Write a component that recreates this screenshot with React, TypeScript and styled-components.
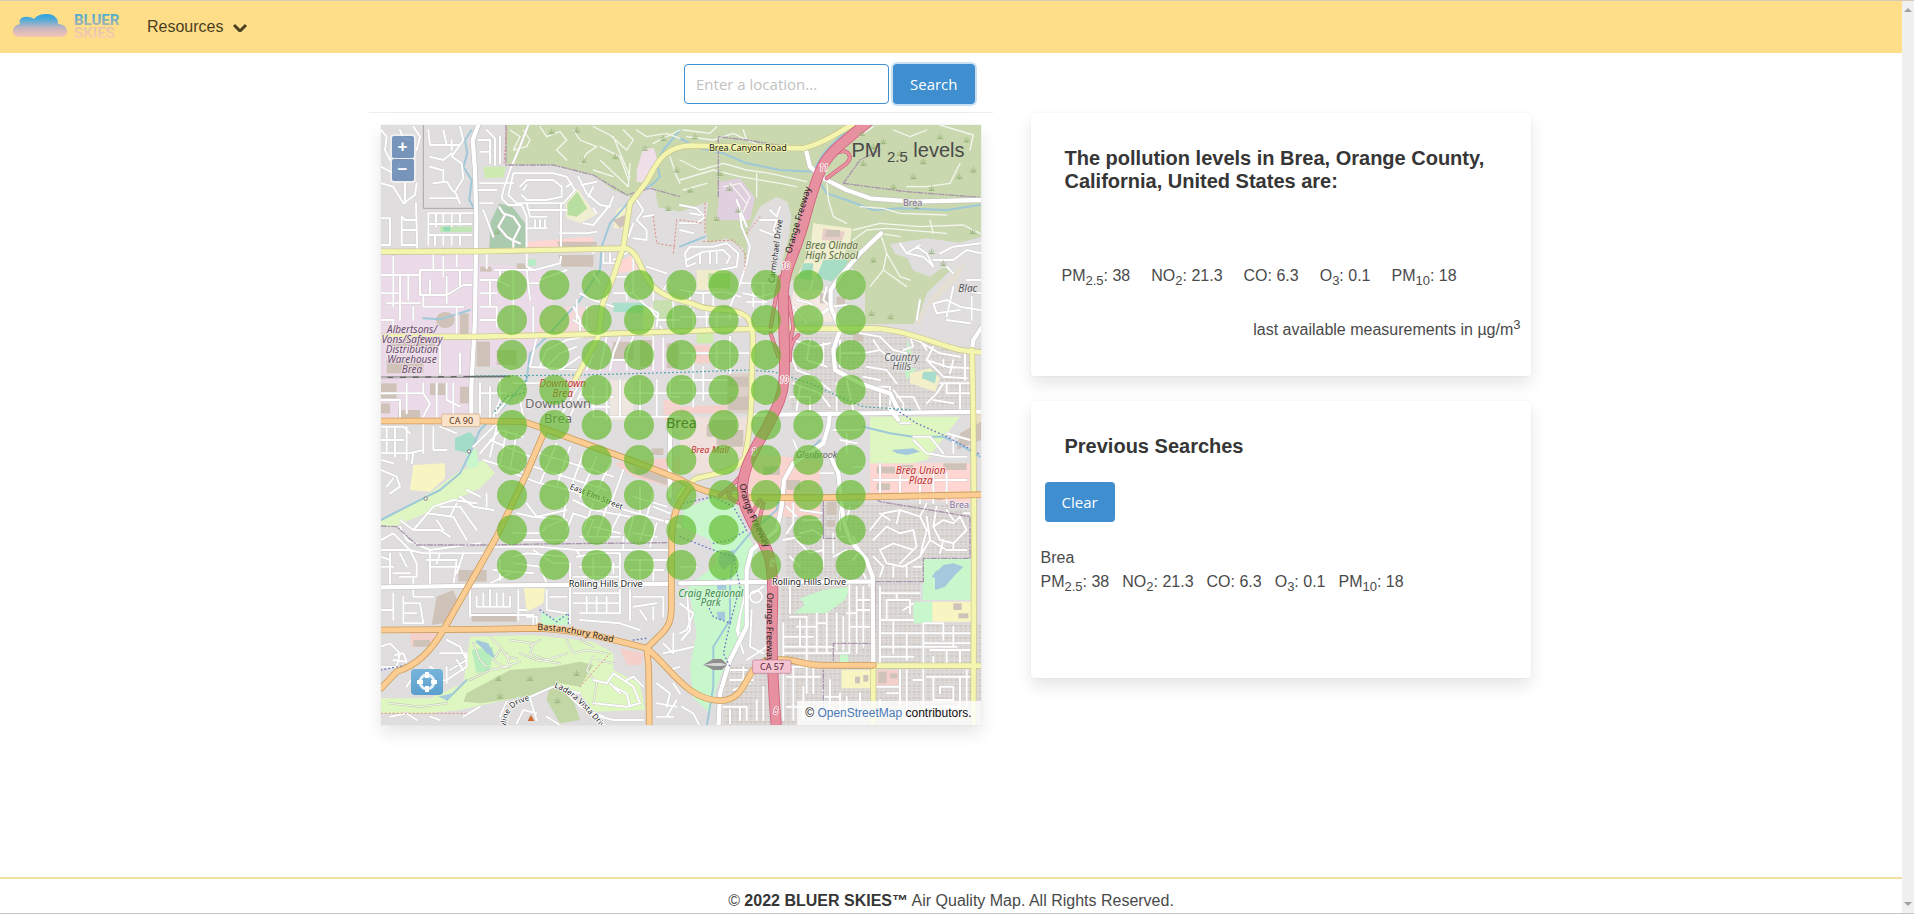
import React from "react";
import styled, { createGlobalStyle } from "styled-components";

const GlobalStyle = createGlobalStyle`
  *, *::before, *::after { box-sizing: border-box; }
  body {
    margin: 0;
    background: #fff;
    color: #4a4a4a;
    font-family: "Liberation Sans", Arial, sans-serif;
    font-size: 16px;
    line-height: 24px;
  }
`;

const uiFont = `"Open Sans", "Noto Sans", sans-serif`;

/* ---------- page frame ---------- */

const Shell = styled.div`
  display: flex;
  min-height: calc(100vh - 1px);
  border-top: 1px solid #d5cbb4;
  border-bottom: 1px solid #c4c4c4;
`;

const Page = styled.div`
  flex: 1;
  min-width: 0;
  display: flex;
  flex-direction: column;
`;

const ScrollTrack = styled.div`
  width: 12px;
  display: flex;
  flex-direction: column;
  justify-content: space-between;
  align-items: center;
  padding: 7px 0;
  background: #f0f0f0;
`;

const ScrollArrow = styled.span<{ $down?: boolean }>`
  border: 4px solid transparent;
  border-top-width: ${(p) => (p.$down ? 4 : 0)}px;
  border-bottom-width: ${(p) => (p.$down ? 0 : 4)}px;
  border-top-color: ${(p) => (p.$down ? "#a0a0a0" : "transparent")};
  border-bottom-color: ${(p) => (p.$down ? "transparent" : "#a0a0a0")};
`;

/* ---------- navigation ---------- */

const Navbar = styled.header`
  display: flex;
  align-items: center;
  gap: 23px;
  height: 52px;
  padding: 0 12px;
  background: #ffde89;
`;

const Brand = styled.a`
  display: block;
  height: 32px;
`;

const BrandText = styled.text`
  font-family: Roboto, sans-serif;
  font-size: 15px;
  font-weight: 700;
`;

const NavButton = styled.button`
  display: flex;
  align-items: center;
  gap: 10px;
  padding: 0;
  border: 0;
  background: none;
  color: #4a3f1f;
  font: inherit;
  cursor: pointer;
`;

/* ---------- content ---------- */

const Main = styled.main`
  flex: 1;
  display: flex;
  justify-content: center;
  align-items: flex-start;
  gap: 38px;
  padding-right: 3px;
`;

const MapColumn = styled.section`
  flex: 0 1 624px;
  min-width: 0;
`;

const SearchForm = styled.form`
  display: flex;
  justify-content: flex-end;
  gap: 4px;
  padding: 11px 18px 8px;
  border-bottom: 1px solid #ededed;
`;

const LocationInput = styled.input`
  width: 205px;
  height: 40px;
  padding: 0 11px;
  border: 1px solid #3e8ed0;
  border-radius: 4px;
  color: #363636;
  font-family: ${uiFont};
  font-size: 15px;
  &::placeholder { color: #c2c2c2; opacity: 1; }
`;

const Button = styled.button<{ $focused?: boolean }>`
  height: 40px;
  padding: 0 17px;
  border: 0;
  border-radius: 4px;
  background: #3e8ed0;
  color: #fff;
  font-family: ${uiFont};
  font-size: 15px;
  box-shadow: ${(p) => (p.$focused ? "0 0 0 2px rgba(62, 142, 208, 0.28)" : "none")};
  cursor: pointer;
`;

const softShadow = "0 8px 16px rgba(10, 10, 10, 0.1), 0 0 0 1px rgba(10, 10, 10, 0.02)";

const MapFrame = styled.div`
  position: relative;
  margin: 12px;
  aspect-ratio: 1;
  box-shadow: ${softShadow};
`;

const MapCanvas = styled.svg`
  display: block;
  width: 100%;
  height: 100%;
`;

const MapTitle = styled.div`
  position: absolute;
  top: 13px;
  right: 16px;
  font-size: 20px;
  sub { font-size: 15px; line-height: 0; }
`;

const ZoomControls = styled.div`
  position: absolute;
  top: 9px;
  left: 9px;
  display: flex;
  flex-direction: column;
  gap: 1px;
  padding: 2px;
  border-radius: 4px;
  background: rgba(255, 255, 255, 0.5);
`;

const ZoomButton = styled.button`
  display: flex;
  align-items: center;
  justify-content: center;
  width: 22px;
  height: 22px;
  padding: 0;
  border: 0;
  border-radius: 2px;
  background: rgba(0, 60, 136, 0.5);
  color: #fff;
  font: bold 17px "Liberation Sans", sans-serif;
`;

const LocateButton = styled.button`
  position: absolute;
  left: 30px;
  bottom: 30px;
  display: flex;
  align-items: center;
  justify-content: center;
  width: 32px;
  height: 26px;
  padding: 0;
  border: 0;
  border-radius: 4px;
  background: linear-gradient(#77b4da, #5b9fce);
`;

const Attribution = styled.div`
  position: absolute;
  right: 0;
  bottom: 0;
  padding: 0 9px 0 8px;
  background: rgba(255, 255, 255, 0.8);
  color: #111;
  font-size: 12px;
  line-height: 24px;
  a { color: #4a7bb8; text-decoration: none; }
`;

const SideColumn = styled.aside`
  flex: 0 1 500px;
  display: flex;
  flex-direction: column;
  gap: 25px;
  padding-top: 60px;
`;

const Card = styled.section<{ $height: number }>`
  min-height: ${(p) => p.$height}px;
  padding: 34px 10px 28px;
  border-radius: 4px;
  background: #fff;
  box-shadow: ${softShadow};
`;

const CardTitle = styled.h2`
  margin: 0 24px;
  color: #363636;
  font-size: 20px;
  font-weight: 700;
  line-height: 23px;
`;

const Readings = styled.div<{ $gap: number }>`
  display: flex;
  flex-wrap: wrap;
  column-gap: ${(p) => p.$gap}px;
  sub { font-size: 13px; line-height: 0; }
`;

const CurrentReadings = styled.div`
  padding: 71px 21px 0;
`;

const UnitsNote = styled.p`
  margin: 30px 0 0;
  text-align: right;
  sup { font-size: 13px; line-height: 0; }
`;

const ClearRow = styled.div`
  padding: 24px 4px;
`;

const History = styled.ul`
  margin: 0;
  padding: 0;
  list-style: none;
`;

const Footer = styled.footer`
  padding-top: 10px;
  border-top: 2px solid #f0e0a2;
  text-align: center;
  strong { color: #363636; }
`;

/* ---------- map drawing ---------- */

const RoadLabel = styled.text<{ $size?: number; $fill?: string; $italic?: boolean; $halo?: string }>`
  font-family: "Noto Sans", sans-serif;
  font-size: ${(p) => p.$size ?? 27}px;
  font-style: ${(p) => (p.$italic ? "italic" : "normal")};
  fill: ${(p) => p.$fill ?? "#222"};
  stroke: ${(p) => p.$halo ?? "none"};
  stroke-width: 5px;
  stroke-linejoin: round;
  paint-order: stroke;
`;

const Strokes = styled.g`
  fill: none;
  stroke-linecap: round;
  stroke-linejoin: round;
`;

const areas: [string, string][] = [
  // hills and open ground
  ["#c9d8ae", "M378 15H1803V350L1740 368L1640 355L1530 372L1545 402L1582 415L1600 452L1650 470L1690 442L1712 450L1640 520L1610 612H1455V480L1400 430L1240 480L1195 500L1110 470L1125 300L1185 225L1228 240L1230 300L1235 360L1200 440L1100 470L1090 385L1040 355L985 370L975 320L985 245L900 275L835 262L825 210L798 188L760 235L700 210L640 165L570 150L520 135H378Z"],
  ["#e0dddd", "M1140 260L1190 230L1222 245L1234 290L1225 360L1205 430L1195 500H1090L1098 420L1105 330Z"],
  ["#eedfe9", "M770 150L790 85L822 85L835 130L800 190L770 185Z"],
  ["#e0cfdf", "M1015 185L1080 175L1125 235L1110 300H1010L1015 250Z"],
  // western industry
  ["#ebdbe8", "M3 405H278V900H3Z"],
  ["#ebdbe8", "M292 430L430 440L500 450L520 560L470 640H292Z"],
  ["#ebdbe8", "M292 655H480L440 740H292Z"],
  ["#e6dae4", "M640 655H900V760H600Z"],
  ["#f3d9d9", "M520 560L650 560V650H470L480 590Z"],
  ["#ffd6d1", "M440 365L640 350V380L445 392Z"],
  ["#ffd6d1", "M700 430L760 405L772 450L720 460Z"],
  ["#aacbae", "M358 250L398 262L435 310L440 385H328L332 305Z"],
  ["#cdebb0", "M310 140H378L370 172L315 175Z"],
  ["#f0efd2", "M555 255L592 205L648 285L600 310L560 295Z"],
  ["#b8dfa0", "M562 250L592 215L622 265L590 290L562 285Z"],
  ["#f3f0cd", "M710 270L745 250L740 325L700 325Z"],
  ["#aae0cb", "M697 548H795V580L700 575Z"],
  ["#f3efca", "M790 560H822V650H790Z"],
  ["#bfe6b4", "M180 320H275V336H180Z"],
  ["#8fdcb4", "M190 320H210V334H190Z"],
  ["#b4ecc4", "M445 418H467V438H445Z"],
  ["#f5e9e4", "M1240 510L1330 510L1370 560V605H1230Z"],
  ["#f2efd0", "M1300 310L1415 325L1410 370L1355 470L1250 470L1290 390Z"],
  ["#e7cfc8", "M1330 325L1395 335L1385 365L1325 360Z"],
  ["#a8ddc5", "M1330 420L1405 415L1395 445L1355 485L1310 470Z"],
  ["#a8ddc5", "M1270 430L1300 430L1295 480L1255 475Z"],
  ["#f0eccb", "M950 450H1040V510H950Z"],
  ["#b9dd9e", "M985 460H1050V505H985Z"],
  ["#e4dfd2", "M1600 610L1680 500L1735 440L1760 430L1730 480L1645 560L1620 615Z"],
  ["#c8dfb0", "M820 540H880V600H820Z"],
  ["#cdeba9", "M950 640L1000 635V670H950Z"],
  ["#f5cfca", "M940 675H990V730H940Z"],
  ["#f5cfca", "M900 860L1040 855L1040 880H900Z"],
  ["#efe0dc", "M900 890H1105L1090 1040L1000 1060L900 1060Z"],
  ["#dcd0c8", "M1040 760H1110V880H1040Z"],
  // Brea downtown
  ["#eee6df", "M690 780H760V900H690Z"],
  ["#f5d4d0", "M850 840H900V900H850Z"],
  ["#f5d0cd", "M700 1030L900 1010V1110L760 1070Z"],
  ["#f9d4cf", "M1110 1000L1320 1020V1190L1100 1190Z"],
  ["#ffd6d1", "M1470 1030H1770V1150L1470 1130Z"],
  ["#def6c0", "M1470 890H1740L1640 1020L1600 1030H1470Z"],
  ["#c6f2c8", "M1570 730L1585 660L1595 700L1580 740L1610 745L1580 780Z"],
  ["#f2efc9", "M1590 760L1650 745L1680 775L1665 815L1590 790Z"],
  ["#a8dccc", "M1630 755H1670L1665 790L1625 775Z"],
  ["#eadfc5", "M1770 870H1803V920H1770Z"],
  // Craig park
  ["#c8f7cc", "M910 1170L1000 1130L1070 1160L1110 1260L1130 1290L1090 1380L1095 1540L1050 1600L1010 1700L990 1780L940 1735L930 1640L950 1540L925 1400L1010 1330L990 1260L905 1220Z"],
  ["#c8f7cc", "M1260 1435L1330 1410L1410 1400L1395 1440L1340 1480L1240 1480L1275 1455Z"],
  ["#c8f7cc", "M1628 1316H1772V1440H1628Z"],
  ["#c8f7cc", "M1600 1445H1660V1510H1600Z"],
  ["#f8f5c3", "M1657 1445H1775V1505H1657Z"],
  ["#f8f5c3", "M1385 1650H1480V1705H1385Z"],
  ["#c8f7cc", "M1380 1595H1405V1630H1380Z"],
  ["#f5cfca", "M1490 1650H1555V1700H1490Z"],
  // western parks and golf course
  ["#dff6c2", "M3 1200L150 1120L230 1060L310 1020L345 1060L300 1105L170 1165L90 1200L40 1220L3 1220Z"],
  ["#f8f5c3", "M100 1035L195 1030V1075L150 1115L90 1110Z"],
  ["#a4dcca", "M225 955L270 935L295 965L265 1000L225 990Z"],
  ["#c8f7cc", "M260 1000L290 985L295 1040L262 1045Z"],
  ["#f8f5c3", "M432 1405H495L490 1450L440 1475Z"],
  ["#c8f7cc", "M485 1475L520 1495L565 1480V1515H480Z"],
  ["#def6c0", "M270 1550L460 1545L640 1565L700 1600L700 1650L780 1690L795 1770L640 1775L600 1720L530 1700L400 1735L240 1770L150 1780L3 1780V1735L150 1735L250 1690Z"],
  ["#c2d7a5", "M260 1720L390 1650L520 1640L600 1625L640 1635L600 1700L540 1690L440 1730L300 1750L250 1745Z"],
  ["#c2d7a5", "M510 1690L570 1710L600 1800L540 1810L500 1740Z"],
  ["#b7ecbd", "M275 1590L340 1580L330 1650L290 1660Z"],
  ["#f5cfca", "M720 1585L790 1600L785 1635L740 1635Z"],
  ["#f5cfca", "M90 1540L170 1540L150 1580H95Z"],
];

const water = [
  "M1665 1360L1690 1335L1720 1330L1750 1340L1725 1365L1695 1400L1665 1410Z",
  "M1655 1370L1670 1350L1680 1380Z",
  "M1535 990L1600 985L1620 995L1580 1005L1550 1000Z",
  "M1020 1300L1060 1290L1070 1320L1030 1350L1015 1330Z",
  "M1010 1380L1035 1375L1040 1410L1012 1410Z",
  "M1010 1475L1035 1475L1035 1500L1015 1500Z",
  "M290 1560L325 1570L345 1610L320 1600Z",
  "M175 1730L215 1720L200 1740Z",
];

const buildings = [
  "M30 655H165V680H30Z", "M20 720H130V760H20Z", "M168 600A28 24 0 1 0 224 600A28 24 0 1 0 168 600Z",
  "M240 580H266V650H240Z", "M290 665H330V740H290Z", "M350 690H410V735H350Z", "M3 790H50V835H3Z",
  "M150 790H200V825H150Z", "M55 870H120V895H55Z", "M3 850H30V880H3Z", "M240 800H268V850H240Z",
  "M300 440H335V455H300Z", "M410 430H440V448H410Z", "M535 405H640V440H545Z", "M530 365H650V385H540Z",
  "M700 300L735 285L742 310L720 325Z", "M700 665H760V720H690Z", "M780 660H820V740H780Z", "M860 670H895V745H860Z",
  "M1340 330H1380V350H1335Z", "M1320 520H1350V550H1320Z", "M1370 530H1395V560H1370Z", "M1420 640H1450V665H1420Z",
  "M1045 770H1105V800H1045Z", "M1045 830H1105V870H1045Z", "M760 1040L860 1070V1095L770 1065Z",
  "M1000 900H1070V930H1090V980H1010V950H980V915Z",
  "M815 985H850V1005H815Z", "M1490 1040H1545V1060H1490Z", "M1565 1035H1600V1055H1565Z", "M1690 1030H1760V1050H1690Z",
  "M1490 1090H1530V1110H1490Z", "M1555 1125H1590V1140H1555Z", "M1655 1125H1690V1140H1655Z",
  "M1340 1145H1370V1185H1340Z", "M1340 1200H1365V1220H1340Z", "M1150 1040H1200V1065H1150Z", "M1220 1080H1260V1110H1220Z",
  "M170 1430L220 1410L235 1450L190 1510L155 1515Z", "M235 1350H320V1385H235Z", "M100 1560H150V1580H100Z",
  "M275 1480H410V1505H275Z", "M1495 1655H1520V1690H1495Z", "M1530 1660H1552V1675H1530Z",
  "M1720 1450H1745V1470H1720Z", "M1735 1480H1765V1495H1735Z", "M1425 1670H1440V1690H1425Z", "M1450 1665H1465V1685H1450Z",
  "M1740 940L1803 905V960L1730 990Z",
];

const hillTracks = [
  "M390 30L420 50L400 90L440 80L450 60L430 30M480 20L500 50L540 35L560 60L530 90L560 120M580 30L600 60L650 80L620 100L600 130M640 20L690 45L740 90L760 60L730 30M660 80L720 110L745 180M700 50L750 170M660 120L745 200L750 130M770 30L800 50L860 40L900 55M820 70L900 30M870 110L890 170L900 190M640 150L700 170",
  "M910 30L990 40L1010 20M920 50L1000 60L1060 40L1100 60L1090 30M1100 60L1160 85M900 120L960 150L1030 130L1100 150L1170 160L1280 185M900 180L1000 150L1080 170L1200 190L1250 200M910 210L980 190M1050 190L1100 250M1030 200L1080 190L1110 230L1090 275M1130 160V230",
  "M1340 180L1345 240L1360 290L1400 310M1440 260L1510 265L1560 280L1700 285M1420 330L1500 310L1620 320L1750 315L1800 340M1420 360L1460 330L1520 325L1700 340M1500 340L1560 350M1503 345L1520 400L1510 450L1580 500M1510 450L1470 500M1520 400L1560 470L1590 480M1680 15L1780 45L1770 90M1740 130L1710 190L1640 200L1580 200M1540 30L1590 50L1640 30M1420 60L1480 20M1660 340L1650 300",
];

const streets = [
  // north west neighbourhoods
  "M3 30L20 50L15 90L30 120M60 30L70 55L95 60M100 20L120 50L110 90M3 140L40 160L60 130M40 200L70 250L105 225L110 190M75 190V250M3 190L40 200M108 250L112 395M3 295H30V375H3M65 290V375H110M65 330H108M65 290L75 300H108",
  "M145 30L150 75H240M150 110L190 120L215 100M150 140L185 150M160 190L200 185L220 215M150 235H230M190 30L200 75M240 20L250 60L215 110L245 130L250 175L225 215L240 250M215 60V90M190 150V185",
  "M145 280H280M145 280V375M168 280V320M190 280V315M215 285V318M240 285V315M145 312H275M145 345H275M165 345V375M190 345V375M215 345V375M240 345V375",
  "M295 60H330V130M320 30L345 55V135M300 95H325M360 50V130M295 210H350M300 250H340M300 190H400M310 270L340 350",
  "M445 15L420 80L390 150L370 210L365 235L385 255H425L440 290V440L460 450",
  "M400 160H520L560 170L585 210L550 250H410L385 225L400 160M420 200L440 180H520L545 200V230L500 240H440L425 225M430 210L440 195M440 250L450 290H500M445 270H560M465 300V325M480 300V325M495 300V325M440 325H500M543 250V380M560 200L575 190M540 340H620L650 335M543 410L540 430L465 450H440",
  "M358 262L370 280L400 290L420 320L400 360M375 285L355 320L380 350L400 362L420 370M400 360V385",
  "M595 170L620 220L660 255L690 260M605 195L650 185M640 200L625 230M610 310L640 315L690 255L700 230M640 265L650 280",
  "M320 400V445M345 450H440M300 480H360V450M330 480V560M300 520H350M350 480L390 500M400 450V640M440 450L450 540M450 490H480M300 560H350V620M300 600H345M460 560V640",
  "M590 540V600M600 520L640 540L700 560M580 560L600 600V640M640 460L660 490M480 480L560 450M620 560V640",
  // industrial blocks
  "M3 465H120M120 450H285M120 450V525H200L250 495H275M40 410V560M60 470V600M3 520H60M85 465V540M160 400V450M190 410V470M230 400V440M150 480V525M200 470V550M240 450V500M20 550H120M130 530V560H250M3 600H40V640M100 560V600M230 560V640M3 840H60V890M80 790V880M3 820H130V790M130 820L150 850L130 890M170 790V890M200 790V840L240 860M220 790V900M240 700V760M180 650V760",
  // centre west
  "M470 650L450 740L600 750M480 740L500 690L560 660L610 650M500 740L540 700L590 680M540 750L600 710M640 700L620 750M680 650L660 750M720 650L700 700L690 750M760 650L740 700V750M820 650V750M850 655V750M690 720H740M580 600L640 640",
  "M300 790V890M300 820H380M330 800V890M360 780V840L340 890M390 830L350 880M400 790H560M420 840L430 890M600 790L560 860L540 890M620 780L570 890M640 800V890M600 830H700M680 780V900M720 780V890M740 820H900M780 780V890M830 780V890M870 780V830H900M620 860H690M640 890H900",
  "M760 410V520L830 590M800 440L860 460M820 480V540M870 480L850 510M880 540V640M740 470H700M800 560L835 580L830 620M700 520H760M740 500V540M830 600H900M840 620L860 640",
  "M770 240L790 270L770 300L800 330V360L760 355M790 290L820 285M760 310L745 350M745 395L700 420M670 400V430H720V400M690 400V425M640 400V380",
  // mid north neighbourhoods
  "M900 255L950 265L975 290L950 310H900M930 280L960 285M900 330L940 340M915 400L930 380H1000L1040 370L1075 400L1070 440L1020 450M920 420L970 395L1030 390L1050 410L1040 430M915 400L920 440L945 430M960 400V430M990 395V430M1010 395V430M1200 260L1190 290L1170 270M1140 300L1190 300L1180 330L1200 350M1140 330L1180 345M1100 320L1070 240L1090 300",
  "M1080 280L1085 320L1110 380L1100 430L1080 490L1050 560M1080 490H1190M1090 520L1140 530L1180 520M1100 545H1160M1120 500V560M1150 490V560M900 510L960 520L1030 515L1080 530M930 520V560M970 520V560M1000 520V560M900 590H1100M940 570V630M980 575V620M1010 575V620M1050 570V600",
  "M1340 500L1330 540L1350 560L1310 590M1250 540L1290 550L1320 575M1350 560L1400 555M1300 480L1290 510M1360 600V560L1330 580M1240 560L1280 610",
  // Blackstone
  "M1560 370L1580 400L1630 410L1660 440L1640 400L1610 380M1580 400L1620 375M1660 420H1720L1760 390L1803 400M1680 400L1720 380L1803 370M1700 440L1720 460M1665 550L1700 540L1740 560L1800 570M1660 550L1670 580L1740 570M1700 600L1770 610M1740 510L1803 520M1760 480H1803M1775 530V600M1720 500L1700 590M1610 600L1620 540",
  // Country Hills
  "M1440 640L1500 650L1540 690L1580 700M1450 700L1500 690L1550 730M1460 740L1520 750L1550 790M1480 660L1500 690M1450 770L1500 780M1560 640L1610 660L1680 700L1740 710M1590 650L1600 680L1570 690M1620 660L1640 690M1660 680L1640 720L1700 740L1770 745M1640 720L1690 770L1760 775M1690 720V740M1720 720L1710 760M1680 790H1770M1690 790L1670 820L1640 850M1700 820H1770M1480 800H1530V860M1500 800V860M1540 810L1570 850V870M1660 840L1720 850M1740 790V870M1700 790V820M1550 830H1600L1620 870M1755 700V780",
  "M900 700H1110M940 700V860M970 740V840M1010 670V750M1050 650V760M900 780H1040M900 820H1040M1230 700L1250 750L1300 770L1350 810M1240 660L1300 680L1350 670M1290 660L1280 720L1340 740M1240 790L1320 820L1350 860M1230 830H1290V870M1380 660V740M1380 700H1440M1250 870L1260 800M1370 790V870M1400 780L1420 870M1330 670V730",
  // south of CA 90
  "M3 920H70L90 940M20 920V1000M45 920V1010M3 960H70M3 1000H90L130 990M80 920V1020M100 1000L95 1030M130 910V1000M160 920V990H200M180 920L230 940M3 1050L50 1070L60 1100L30 1120M40 1075L20 1100M3 1020L40 1030M280 980L350 910M300 1000L360 930L430 950M310 1020L440 1060M350 920L330 1010M380 930L360 1030M410 940L390 1050M330 960L450 1010",
  "M60 1200L100 1230L160 1160L220 1140L290 1150M60 1220L80 1260L150 1290L300 1270M100 1230L180 1230L210 1250M140 1180L220 1190L260 1260M180 1160L240 1160L290 1230M230 1150L210 1190M240 1130L280 1160L340 1170M260 1110L300 1130M320 1120V1160M170 1200L190 1230",
  "M3 1260L40 1240L90 1290L130 1300H330M3 1290H90L110 1330V1370H60M30 1300V1400M60 1300L80 1340M150 1290V1400M150 1340H240M140 1320H230L220 1400M90 1360H40M180 1300L170 1330M250 1300L230 1360M3 1340H40M100 1370V1400M3 1310L30 1320",
  "M40 1420V1500M70 1430V1510M70 1450H120M70 1480H110M100 1410V1430H160M120 1450L130 1510H70M3 1470H40M270 1410V1490M290 1430V1460H390V1430M310 1420V1460M330 1410V1460M350 1420V1460M370 1420V1460M415 1410V1500M270 1485H460V1515M415 1470H440M440 1490H470V1510",
  "M400 1060L480 1090L570 1110L700 1160L860 1205M490 960L440 1060L400 1140M530 970L480 1090M570 980L530 1100M610 1000L570 1110M650 1010L600 1130M690 1030L640 1140M730 1050L690 1160M480 1000L700 1070M460 1040L680 1110M410 1180L460 1190L560 1200M440 1150L470 1190L560 1170M560 1130L550 1200L500 1220M560 1230L580 1180L640 1200L620 1250M400 1240H480L500 1220M430 1260H560M580 1140L640 1170L750 1190M640 1150L610 1230M680 1160L650 1250M720 1180L680 1260M600 1250H720M640 1220L720 1240M760 1190L740 1270M800 1200L780 1260M830 1210L810 1280M760 1240L830 1250M870 1180L820 1160M760 1130L860 1160M780 1100V1180M820 1120L800 1190",
  "M340 1280H480L590 1290H880M400 1310L440 1300L560 1310M360 1320V1380M340 1350L460 1360M400 1330L480 1340L500 1390M460 1290L520 1330H570V1390M600 1310L590 1290M590 1310L650 1300H720V1390M600 1340H720M640 1310V1380M580 1370H720M700 1360V1330M740 1320H860M750 1350H850M780 1320V1390M820 1320V1390M730 1250V1290M330 1390L390 1360",
  "M500 1410V1470L560 1480M510 1430H560M570 1400V1510M580 1420H720M720 1410V1480H600M580 1450H720M620 1430V1480M650 1430V1480M680 1430V1480M750 1410V1500M760 1430H850M760 1460L830 1450M780 1470L800 1500M820 1460V1500M600 1500L720 1510L780 1530M850 1430V1490",
  // golf course drives
  "M430 1740L520 1700L600 1720M450 1735L470 1800M540 1700L600 1760L670 1790M380 1745L360 1790M300 1760L250 1790M30 1790L80 1780L110 1800M150 1790L180 1800M470 1780L430 1770L410 1810M500 1790L540 1815M640 1750L740 1760L780 1750L760 1700L700 1660L680 1690L640 1680M740 1680L760 1670L790 1700M700 1700L740 1720L750 1760M620 1780L700 1800H790M690 1690L720 1720",
  "M200 1560L240 1580L260 1620L210 1650M180 1600L260 1600M200 1640V1690M230 1620L250 1650M150 1640L180 1660M120 1690L200 1680L260 1640M3 1640L50 1640L60 1600L30 1570L3 1580M40 1620L80 1625L70 1600L45 1605M260 1600V1640M100 1670L80 1700",
  "M830 1620L870 1650L900 1640M850 1600L900 1590M880 1540V1600L850 1570M830 1690L870 1720L860 1760M880 1690L900 1720M830 1750L890 1760M860 1790L890 1740M830 1790H880M900 1450L940 1480L920 1530L900 1540M900 1590L940 1580M905 1760L940 1780L960 1820M900 1340L950 1340",
  // east of the freeway, south of CA 90
  "M1220 1160L1250 1190M1240 1150V1210L1220 1240M1260 1170L1330 1180M1270 1200H1320M1260 1240L1300 1230L1330 1250M1250 1260L1290 1300L1330 1290M1230 1310L1260 1340M1330 1250V1340M1360 1240V1300M1380 1160V1230M1410 1160L1400 1200L1380 1210M1380 1250H1420L1440 1290L1420 1320M1360 1310L1400 1290M1210 1260L1260 1250M1240 960L1260 1010L1310 1000M1320 1060H1360M1360 930H1440M1380 960L1430 970M1400 940V1000M1420 1040H1450",
  "M1470 1230L1510 1180L1560 1170L1620 1190L1640 1150M1480 1260L1520 1220L1560 1240L1600 1230L1610 1280L1560 1330M1500 1290L1540 1270L1600 1290M1500 1290L1520 1330L1570 1340L1620 1310M1620 1190L1640 1230L1620 1310L1650 1260L1640 1190M1560 1170L1550 1210M1670 1160L1660 1220L1690 1200L1720 1210L1740 1190L1760 1230L1720 1270L1680 1260L1660 1220M1650 1260L1700 1290H1760M1720 1270V1290M1680 1300L1690 1260M1500 1180L1530 1200M1700 1170L1720 1200M1480 1310L1510 1340L1500 1370M1540 1340V1370M1580 1340V1370M1600 1340H1625M1750 1180H1770M1450 1360L1470 1400",
  "M1210 1510V1720M1230 1490H1280V1720M1250 1520H1310M1310 1480V1600M1340 1480V1600M1310 1510H1340M1370 1480V1590M1408 1385V1600H1210M1430 1400V1600M1450 1400V1580M1430 1440H1470M1430 1470H1470M1210 1550H1300M1210 1580H1360M1230 1400V1480M1260 1500V1580M1408 1520H1470M1400 1480H1430M1390 1490V1590M1210 1640H1350M1220 1670H1320M1240 1640V1800M1270 1700V1800M1300 1640V1720M1210 1700V1800M1330 1700V1800M1350 1680V1800M1330 1730H1380M1380 1720V1800M1400 1730V1800M1440 1720V1800M1220 1760H1300",
  "M1500 1400V1640M1500 1420H1620M1520 1440H1590V1480M1500 1500H1600M1520 1440V1500M1500 1540H1730M1540 1500V1600M1500 1580H1730M1580 1540V1620M1630 1510V1800M1630 1510H1690M1690 1510V1560M1720 1520V1580M1630 1570H1770M1650 1590H1770M1660 1610V1640M1700 1590V1640M1740 1590V1640M1720 1540H1770M1500 1610H1600M1550 1420V1440M1570 1470L1600 1450M1490 1700H1560M1560 1650V1760M1580 1650V1800M1600 1680H1630M1520 1720H1560M1500 1740V1800M1640 1670H1770M1660 1670V1740H1720V1700H1680V1720M1740 1670V1800M1640 1760H1740M1760 1650V1760",
  "M1090 1600L1070 1530L1100 1400M1120 1420L1150 1400M1110 1430A18 18 0 1 0 1146 1430A18 18 0 1 0 1110 1430M1115 1470L1110 1580L1150 1600M1090 1540H1075L1080 1490M1160 1580L1100 1620M1040 1650H1100M1050 1680H1120M1060 1710L1110 1690M1030 1760H1100V1800M1050 1770V1810M1080 1760V1800M1130 1740V1800M1150 1700V1800M1090 1640V1690M1120 1630V1670M920 1410L930 1530L905 1560",
  "M1600 960L1640 1000L1700 1010L1760 1010M1600 950L1650 950L1690 1000M1700 940L1770 960M1720 950V1000M1560 910H1590M1500 1030V1130M1560 1060V1130M1620 1050V1150M1660 1060V1150M1700 1060V1150M1480 1080H1760",
];

const cartPaths =
  "M330 1550L360 1580L380 1610L410 1615M360 1590L340 1620L370 1640L420 1625M390 1560L460 1570L450 1600L500 1620L560 1600M420 1600L470 1620L540 1630M560 1560L580 1600L620 1590L680 1600M600 1560L640 1580M640 1610L620 1650L650 1690L640 1750M450 1580L480 1560M270 1680L330 1650L390 1640L380 1600M280 1570L300 1620L320 1640M650 1620L700 1630M30 1750L120 1760L200 1750";

const creeks = [
  "M275 30L255 60L262 100L250 140L275 180L268 240L285 270",
  "M900 55L960 85L1030 100L1100 130L1200 150L1300 155L1340 220L1400 240L1480 270L1560 265L1700 270L1800 255M900 30L850 90L830 130L840 170L820 190L760 230L690 310L665 380L660 450L600 540L500 650L450 700L440 780L380 850L300 930L270 1000L240 1060L180 1110L100 1150L3 1200",
  "M1300 155L1330 100L1370 60L1400 30M900 380L950 360L975 350M1450 920L1530 940L1600 950L1690 950L1750 980L1800 1010M1320 960L1270 1010L1220 1060L1200 1120L1190 1170L1110 1240L1060 1300L1050 1400L1050 1500L1000 1580L1000 1700L980 1820M130 595L180 598L270 570",
  "M200 1740L260 1680M290 1565L340 1610",
];

const mainStreets = [
  "M295 15L278 60L285 150L289 300L285 600L274 800L274 900",
  "M3 1402L300 1397L860 1392M900 1390L1200 1385H1478",
  "M1278 90L1290 140L1330 175L1400 210L1470 235L1600 245L1800 240",
  "M1503 340L1440 400L1380 470L1352 510L1352 560L1380 630L1360 690L1365 750L1440 790L1530 820L1555 870",
  "M1125 885L1450 880L1803 875",
  "M1350 880L1345 920L1330 970L1240 1030L1212 1080L1205 1160L1190 1230L1115 1290L1100 1350L1100 1520L1050 1620L1020 1720L1015 1830",
  "M1352 1010L1375 1060L1390 1200L1410 1260L1460 1320L1478 1370L1480 1640",
  "M870 915V1130M860 1205L900 1220",
  "M1803 625L1780 660L1775 700M1530 865L1555 900",
];

const yellowRoads = [
  "M3 395L300 394L740 385C780 400 780 460 820 500C860 540 920 540 960 560C1010 575 1060 560 1100 590C1130 620 1115 700 1115 800C1115 880 1105 960 1095 1010C1070 1060 1000 1060 950 1075C930 1085 910 1110 895 1130",
  "M3 650L300 650L660 642L1100 627L1480 625C1580 630 1660 670 1740 690L1803 697",
  "M580 790L655 650L668 550L700 470L730 380L750 250L800 185C830 130 850 80 930 77L1270 85C1330 70 1370 40 1420 12",
  "M1776 690L1780 900L1782 1300L1780 1830",
  "M1480 1637H1803M1480 1640V1830",
];

const orangeRoads = [
  "M3 903H300L430 905L490 925L750 1020L900 1078C950 1108 1020 1130 1100 1133L1330 1133L1803 1124",
  "M495 930L440 1060L350 1250L190 1530C150 1600 100 1640 50 1655L3 1705",
  "M3 1530L300 1528L470 1525C560 1526 650 1545 800 1585L830 1555C870 1520 875 1500 874 1450L875 1250C880 1160 900 1150 930 1100",
  "M800 1585L806 1640L808 1830M800 1585C870 1640 920 1740 1020 1742C1110 1742 1090 1630 1170 1620C1250 1612 1260 1638 1340 1636H1480",
];

const motorway =
  "M1465 5C1400 60 1345 95 1322 150C1300 200 1285 260 1268 320C1245 400 1212 450 1210 520C1208 600 1218 700 1212 780C1208 840 1180 880 1162 920C1140 960 1120 990 1100 1040C1080 1100 1085 1140 1105 1180C1125 1230 1160 1270 1170 1320C1182 1380 1178 1450 1176 1520C1176 1620 1178 1700 1190 1830";

const ramps =
  "M1340 175L1400 130C1420 110 1405 90 1380 95C1350 100 1330 120 1320 150M1200 470C1185 540 1180 580 1172 620M1224 530L1240 620L1225 690M1172 640L1195 710M1230 720C1225 670 1250 650 1255 645M1095 1050C1060 1100 1040 1110 1020 1125M1080 1110C1040 1100 1030 1130 1080 1150M1110 1190L1140 1140M1150 1150L1130 1230";

const bikePaths = [
  "M290 768L600 765L900 757L1100 750L1180 755L1290 790L1400 840L1450 860L1600 870",
  "M440 770L430 820L380 830L340 880",
];

const footPaths = [
  "M1550 870L1610 910L1700 950L1800 1003",
  "M480 1470L530 1505L565 1480V1515M3 1650L80 1635M760 1560L800 1555",
  "M910 1150L1000 1130L1060 1160L1100 1230L1050 1260L1000 1270M900 1250L1000 1290L1060 1310L1080 1400L1050 1510L1000 1490L980 1450M1050 1510L1030 1600L1050 1640",
];

const boundaries =
  "M378 15V135H520L640 165L740 225L810 205L900 230M1015 230V50L1100 60L1250 85L1300 80M1390 190L1440 120L1500 90M1390 190L1580 215L1800 232M3 1218L50 1220L110 1275H330L480 1272L860 1268M1330 1135V1255L1370 1255M1330 1255V1130L1480 1130L1500 1145L1770 1190V1315H1630V1385M1630 1385H1485V1570H1360V1640H1330V1800";

const tufts: [number, number][] = [
  [515, 35], [610, 120], [706, 110], [795, 85], [850, 55], [890, 150], [865, 265], [590, 30],
  [945, 50], [1020, 160], [1048, 205], [1075, 270], [1010, 295], [930, 210], [1445, 40], [1510, 65], [1680, 50], [1760, 60],
  [1480, 80], [1450, 130], [1630, 125], [1655, 205], [1540, 200], [1738, 170], [1780, 150], [1610, 260], [1778, 335],
  [1690, 430], [1475, 580], [1532, 590], [1480, 420], [1655, 395], [1600, 170], [1560, 100],
  [360, 1728], [450, 1675], [590, 1660], [532, 1742], [355, 1675], [352, 335],
];

const sensorColumns = Array.from({ length: 9 }, (_, i) => 396 + i * 127);
const sensorRows = Array.from({ length: 9 }, (_, i) => 495 + i * 105);

function StreetMap() {
  return (
    <MapCanvas viewBox="3 15 1800 1800" role="img" aria-label="Street map of Brea with PM 2.5 levels">
      <defs>
        <pattern id="houses" width="14" height="18" patternUnits="userSpaceOnUse">
          <rect width="14" height="18" fill="#dcd8d6" />
          <rect x="2" y="3" width="9" height="6" fill="#c9c2bc" />
          <rect x="4" y="12" width="7" height="4" fill="#d0c9c4" />
        </pattern>
        <path id="lbl-fwy-n" d="M1233 402L1305 160" />
        <path id="lbl-fwy-m" d="M1080 1092C1082 1140 1110 1200 1170 1310" />
        <path id="lbl-fwy-s" d="M1161 1418L1160 1680" />
        <path id="lbl-carm" d="M1182 490L1214 250" />
        <path id="lbl-elm" d="M568 1106L800 1199" />
        <path id="lbl-bast" d="M472 1530C550 1532 640 1550 760 1584" />
        <path id="lbl-ladera" d="M522 1702C580 1722 620 1770 720 1890" />
        <path id="lbl-skyline" d="M378 1822C382 1770 400 1750 460 1738" />
      </defs>
      <rect x="0" y="0" width="1810" height="1830" fill="#dfdddd" />
      <path fill="url(#houses)" opacity="0.7" d="M1230 640H1440L1600 640L1770 700V870H1230ZM1215 1150H1770V1385H1215ZM1200 1390H1480L1490 1390H1620V1815H1200ZM1620 1510H1803V1815H1620ZM1030 1640L1180 1620V1815H1030Z" />
      {areas.map(([fill, d]) => <path key={d} fill={fill} d={d} />)}
      <g fill="#a5c9dc">{water.map((d) => <path key={d} d={d} />)}</g>
      <g fill="#cfc3b9">{buildings.map((d) => <path key={d} d={d} />)}</g>
      <Strokes>
        <g stroke="#9fc8d9" strokeWidth="6">{creeks.map((d) => <path key={d} d={d} />)}</g>
        <path d="M130 15V265H285" stroke="#aaa6a6" strokeWidth="3" />
        <g stroke="#f4f6ee" strokeWidth="4">{hillTracks.map((d) => <path key={d} d={d} />)}</g>
        <path d={cartPaths} stroke="#b4bda4" strokeWidth="6" />
        <path d={cartPaths} stroke="#f0f4e8" strokeWidth="4" />
        <g stroke="#cbc8c8" strokeWidth="8">{streets.map((d) => <path key={d} d={d} />)}</g>
        <g stroke="#fff" strokeWidth="6">{streets.map((d) => <path key={d} d={d} />)}</g>
        <path d={boundaries} stroke="#a995ad" strokeWidth="4" strokeDasharray="16 6 4 6" />
        <path d="M900 300L970 310M975 250V340M970 365L1060 360L1095 400V450M1140 290L1100 340M820 290L830 370L890 380M890 300L880 400M380 30L372 130M620 1130H650M3 1780H260M600 1700L690 1600" stroke="#e08c86" strokeWidth="3" strokeDasharray="4 8" />
        <g stroke="#c0bcbc" strokeWidth="16">{mainStreets.map((d) => <path key={d} d={d} />)}</g>
        <g stroke="#fff" strokeWidth="13">{mainStreets.map((d) => <path key={d} d={d} />)}</g>
        <path d="M3 772L390 769" stroke="#666" strokeWidth="5" />
        <path d="M3 772L250 770" stroke="#d8d4d4" strokeWidth="3" strokeDasharray="18 20" />
        <g stroke="#4fa3a8" strokeWidth="4" strokeDasharray="2 10">{bikePaths.map((d) => <path key={d} d={d} />)}</g>
        <g stroke="#6a74c4" strokeWidth="4" strokeDasharray="2 10">{footPaths.map((d) => <path key={d} d={d} />)}</g>
        <g stroke="#c9c58c" strokeWidth="18">{yellowRoads.map((d) => <path key={d} d={d} />)}</g>
        <g stroke="#f4f5ae" strokeWidth="14">{yellowRoads.map((d) => <path key={d} d={d} />)}</g>
        <g stroke="#cf9f60" strokeWidth="20">{orangeRoads.map((d) => <path key={d} d={d} />)}</g>
        <g stroke="#fbcd92" strokeWidth="15">{orangeRoads.map((d) => <path key={d} d={d} />)}</g>
        <path d={ramps} stroke="#cf5f7c" strokeWidth="12" />
        <path d={ramps} stroke="#e892a2" strokeWidth="8" />
        <path d={motorway} stroke="#cf5f7c" strokeWidth="33" />
        <path d={motorway} stroke="#e790a0" strokeWidth="28" />
        <g stroke="#8fae72" strokeWidth="2">
          {tufts.map(([x, y]) => (
            <path key={`${x}-${y}`} d={`M${x - 9} ${y + 6}H${x + 9}M${x} ${y + 6}V${y - 8}M${x - 2} ${y + 6}L${x - 7} ${y - 3}M${x + 2} ${y + 6}L${x + 7} ${y - 3}`} />
          ))}
        </g>
      </Strokes>

      <path d="M970 1634L1000 1617H1025L1042 1634L1025 1650H1000Z" fill="#8f8f8f" />
      <path d="M970 1634L1000 1629H1025L1042 1634L1025 1638H1000Z" fill="#d5d5d5" />
      <path d="M443 1803L453 1784L463 1803Z" fill="#d06a30" />
      <g fill="#fff" stroke="#777" strokeWidth="3">
        <circle cx="267" cy="994" r="5" /><circle cx="137" cy="1136" r="5" />
      </g>

      <RoadLabel x="987" y="92" $halo="#f4f5ae">Brea Canyon Road</RoadLabel>
      <RoadLabel x="566" y="1402" $halo="#fff">Rolling Hills Drive</RoadLabel>
      <RoadLabel x="1176" y="1394" $halo="#fff">Rolling Hills Drive</RoadLabel>
      <RoadLabel><textPath href="#lbl-fwy-n">Orange Freeway</textPath></RoadLabel>
      <RoadLabel><textPath href="#lbl-fwy-m">Orange Freeway</textPath></RoadLabel>
      <RoadLabel><textPath href="#lbl-fwy-s">Orange Freeway</textPath></RoadLabel>
      <RoadLabel $size={24} $halo="#e8e8e8"><textPath href="#lbl-carm">Carmichael Drive</textPath></RoadLabel>
      <RoadLabel $size={24} $halo="#fff"><textPath href="#lbl-elm">East Elm Street</textPath></RoadLabel>
      <RoadLabel $halo="#fbcd92"><textPath href="#lbl-bast">Bastanchury Road</textPath></RoadLabel>
      <RoadLabel $size={24} $halo="#fff"><textPath href="#lbl-ladera">Ladera Vista Driv</textPath></RoadLabel>
      <RoadLabel $size={24} $halo="#fff"><textPath href="#lbl-skyline">yline Drive</textPath></RoadLabel>

      <g textAnchor="middle">
        <RoadLabel $italic $size={30} $fill="#6b4a6b" $halo="#eee4ec">
          <tspan x="96" y="640">Albertsons/</tspan>
          <tspan x="96" y="670">Vons/Safeway</tspan>
          <tspan x="96" y="700">Distribution</tspan>
          <tspan x="96" y="729">Warehouse</tspan>
          <tspan x="96" y="759">Brea</tspan>
        </RoadLabel>
        <RoadLabel $italic $size={30} $fill="#c02f2f" $halo="#f3e8e4">
          <tspan x="548" y="802">Downtown</tspan>
          <tspan x="548" y="831">Brea</tspan>
        </RoadLabel>
        <RoadLabel $size={39} $fill="#6a6a6a" $halo="#ece8e8">
          <tspan x="534" y="864">Downtown</tspan>
          <tspan x="534" y="908">Brea</tspan>
        </RoadLabel>
        <RoadLabel x="904" y="924" $size={42} $fill="#2c2c2c">Brea</RoadLabel>
        <RoadLabel $italic $size={30} $fill="#5f6b3a" $halo="#e6ebd2">
          <tspan x="1355" y="388">Brea Olinda</tspan>
          <tspan x="1355" y="417">High School</tspan>
        </RoadLabel>
        <RoadLabel $italic $size={30} $fill="#666" $halo="#e8e8e8">
          <tspan x="1565" y="722">Country</tspan>
          <tspan x="1565" y="751">Hills</tspan>
        </RoadLabel>
        <RoadLabel x="1598" y="257" $fill="#8a6a9a" $halo="#dbe4cc">Brea</RoadLabel>
        <RoadLabel x="1738" y="1164" $fill="#8a6a9a" $halo="#eee">Brea</RoadLabel>
        <RoadLabel x="990" y="998" $italic $fill="#c02f2f" $halo="#f7e0dc">Brea Mall</RoadLabel>
        <RoadLabel x="1310" y="1013" $italic $fill="#666">Glenbrook</RoadLabel>
        <RoadLabel $italic $size={30} $fill="#c02f2f" $halo="#fbe6e2">
          <tspan x="1622" y="1062">Brea Union</tspan>
          <tspan x="1622" y="1091">Plaza</tspan>
        </RoadLabel>
        <RoadLabel $italic $size={30} $fill="#3f8a50" $halo="#d8f6da">
          <tspan x="992" y="1430">Craig Regional</tspan>
          <tspan x="992" y="1459">Park</tspan>
        </RoadLabel>
        <RoadLabel x="1331" y="152" $size={24} $italic $fill="#d0506a" $halo="#fff">11</RoadLabel>
        <RoadLabel x="1216" y="447" $size={24} $italic $fill="#d0506a" $halo="#fff">10</RoadLabel>
        <RoadLabel x="1212" y="788" $size={24} $italic $fill="#d0506a" $halo="#fff">10</RoadLabel>
        <RoadLabel x="1123" y="1006" $size={24} $italic $fill="#d0506a" $halo="#fff">9</RoadLabel>
        <RoadLabel x="1178" y="1338" $size={24} $italic $fill="#d0506a" $halo="#fff">9</RoadLabel>
        <RoadLabel x="1187" y="1782" $size={24} $italic $fill="#d0506a" $halo="#fff">8</RoadLabel>
      </g>
      <RoadLabel x="1735" y="515" $italic $fill="#555" $size={30}>Blac</RoadLabel>

      <rect x="185" y="882" width="115" height="38" rx="5" fill="#fbe3cb" stroke="#c9a47c" strokeWidth="2" />
      <rect x="1118" y="1620" width="115" height="40" rx="5" fill="#f3c3d2" stroke="#c07a90" strokeWidth="2" />
      <g textAnchor="middle">
        <RoadLabel x="243" y="911" $fill="#5a3a1c">CA 90</RoadLabel>
        <RoadLabel x="1176" y="1650" $fill="#5a1c30">CA 57</RoadLabel>
      </g>

      <g fill="#5cb824" fillOpacity="0.64">
        {sensorRows.map((cy) => sensorColumns.map((cx) => <circle key={`${cx}-${cy}`} cx={cx} cy={cy} r="45" />))}
      </g>
    </MapCanvas>
  );
}

/* ---------- small parts ---------- */

function Logo() {
  return (
    <svg width="112" height="32" viewBox="0 -1 112 32" role="img" aria-label="Bluer Skies">
      <defs>
        <linearGradient id="sky" x1="0" y1="2" x2="0" y2="25" gradientUnits="userSpaceOnUse">
          <stop offset="0" stopColor="#2ba3df" />
          <stop offset="0.25" stopColor="#53abd6" />
          <stop offset="0.6" stopColor="#c5b5c0" />
          <stop offset="1" stopColor="#f6c5b4" />
        </linearGradient>
        <linearGradient id="bluer" x1="0" y1="2" x2="0" y2="13" gradientUnits="userSpaceOnUse">
          <stop offset="0" stopColor="#4aacd0" />
          <stop offset="1" stopColor="#a3b3b4" />
        </linearGradient>
        <linearGradient id="skies" x1="0" y1="15" x2="0" y2="26" gradientUnits="userSpaceOnUse">
          <stop offset="0" stopColor="#e0c4b0" />
          <stop offset="1" stopColor="#f8cdae" />
        </linearGradient>
      </defs>
      <path fill="url(#sky)" d="M8 25C3 25 1 22 1 19C1 15 4 13 8 12C6 8 10 4 16 5C19 5 21 6 22 7C25 3 30 2 35 2C42 2 47 7 46 12C51 12 55 15 55 19C55 23 52 25 47 25Z" />
      <BrandText x="62" y="13" fill="url(#bluer)">BLUER</BrandText>
      <BrandText x="62" y="26" fill="url(#skies)">SKIES</BrandText>
    </svg>
  );
}

type Reading = { name: string; sub?: string; value: string };

const readings: Reading[] = [
  { name: "PM", sub: "2.5", value: "38" },
  { name: "NO", sub: "2", value: "21.3" },
  { name: "CO", value: "6.3" },
  { name: "O", sub: "3", value: "0.1" },
  { name: "PM", sub: "10", value: "18" },
];

function ReadingList({ gap }: { gap: number }) {
  return (
    <Readings $gap={gap}>
      {readings.map((r) => (
        <span key={r.name + (r.sub ?? "")}>
          {r.name}
          {r.sub && <sub>{r.sub}</sub>}: {r.value}
        </span>
      ))}
    </Readings>
  );
}

export default function App() {
  return (
    <>
      <GlobalStyle />
      <Shell>
        <Page>
          <Navbar>
            <Brand href="#"><Logo /></Brand>
            <NavButton type="button">
              Resources
              <svg width="14" height="10" viewBox="0 0 14 10" fill="none" stroke="currentColor" strokeWidth="3" aria-hidden="true">
                <path d="M1 3L7 9L13 3" />
              </svg>
            </NavButton>
          </Navbar>
          <Main>
            <MapColumn>
              <SearchForm onSubmit={(e) => e.preventDefault()}>
                <LocationInput type="text" aria-label="Location" placeholder="Enter a location..." />
                <Button type="submit" $focused>Search</Button>
              </SearchForm>
              <MapFrame>
                <StreetMap />
                <MapTitle>PM <sub>2.5</sub> levels</MapTitle>
                <ZoomControls>
                  <ZoomButton type="button" aria-label="Zoom in">+</ZoomButton>
                  <ZoomButton type="button" aria-label="Zoom out">−</ZoomButton>
                </ZoomControls>
                <LocateButton type="button" aria-label="Centre map">
                  <svg width="22" height="22" viewBox="0 0 22 22" fill="none" stroke="#fff" aria-hidden="true">
                    <circle cx="11" cy="11" r="7" strokeWidth="3" stroke="#e6f1f8" />
                    <path d="M11 1V7M11 15V21M1 11H7M15 11H21" strokeWidth="4" />
                  </svg>
                </LocateButton>
                <Attribution>© <a href="#">OpenStreetMap</a> contributors.</Attribution>
              </MapFrame>
            </MapColumn>
            <SideColumn>
              <Card $height={263}>
                <CardTitle>The pollution levels in Brea, Orange County, California, United States are:</CardTitle>
                <CurrentReadings><ReadingList gap={21} /></CurrentReadings>
                <UnitsNote>last available measurements in µg/m<sup>3</sup></UnitsNote>
              </Card>
              <Card $height={277}>
                <CardTitle>Previous Searches</CardTitle>
                <ClearRow><Button type="button">Clear</Button></ClearRow>
                <History>
                  <li>
                    Brea
                    <ReadingList gap={13} />
                  </li>
                </History>
              </Card>
            </SideColumn>
          </Main>
          <Footer>© <strong>2022 BLUER SKIES™</strong> Air Quality Map. All Rights Reserved.</Footer>
        </Page>
        <ScrollTrack>
          <ScrollArrow />
          <ScrollArrow $down />
        </ScrollTrack>
      </Shell>
    </>
  );
}
